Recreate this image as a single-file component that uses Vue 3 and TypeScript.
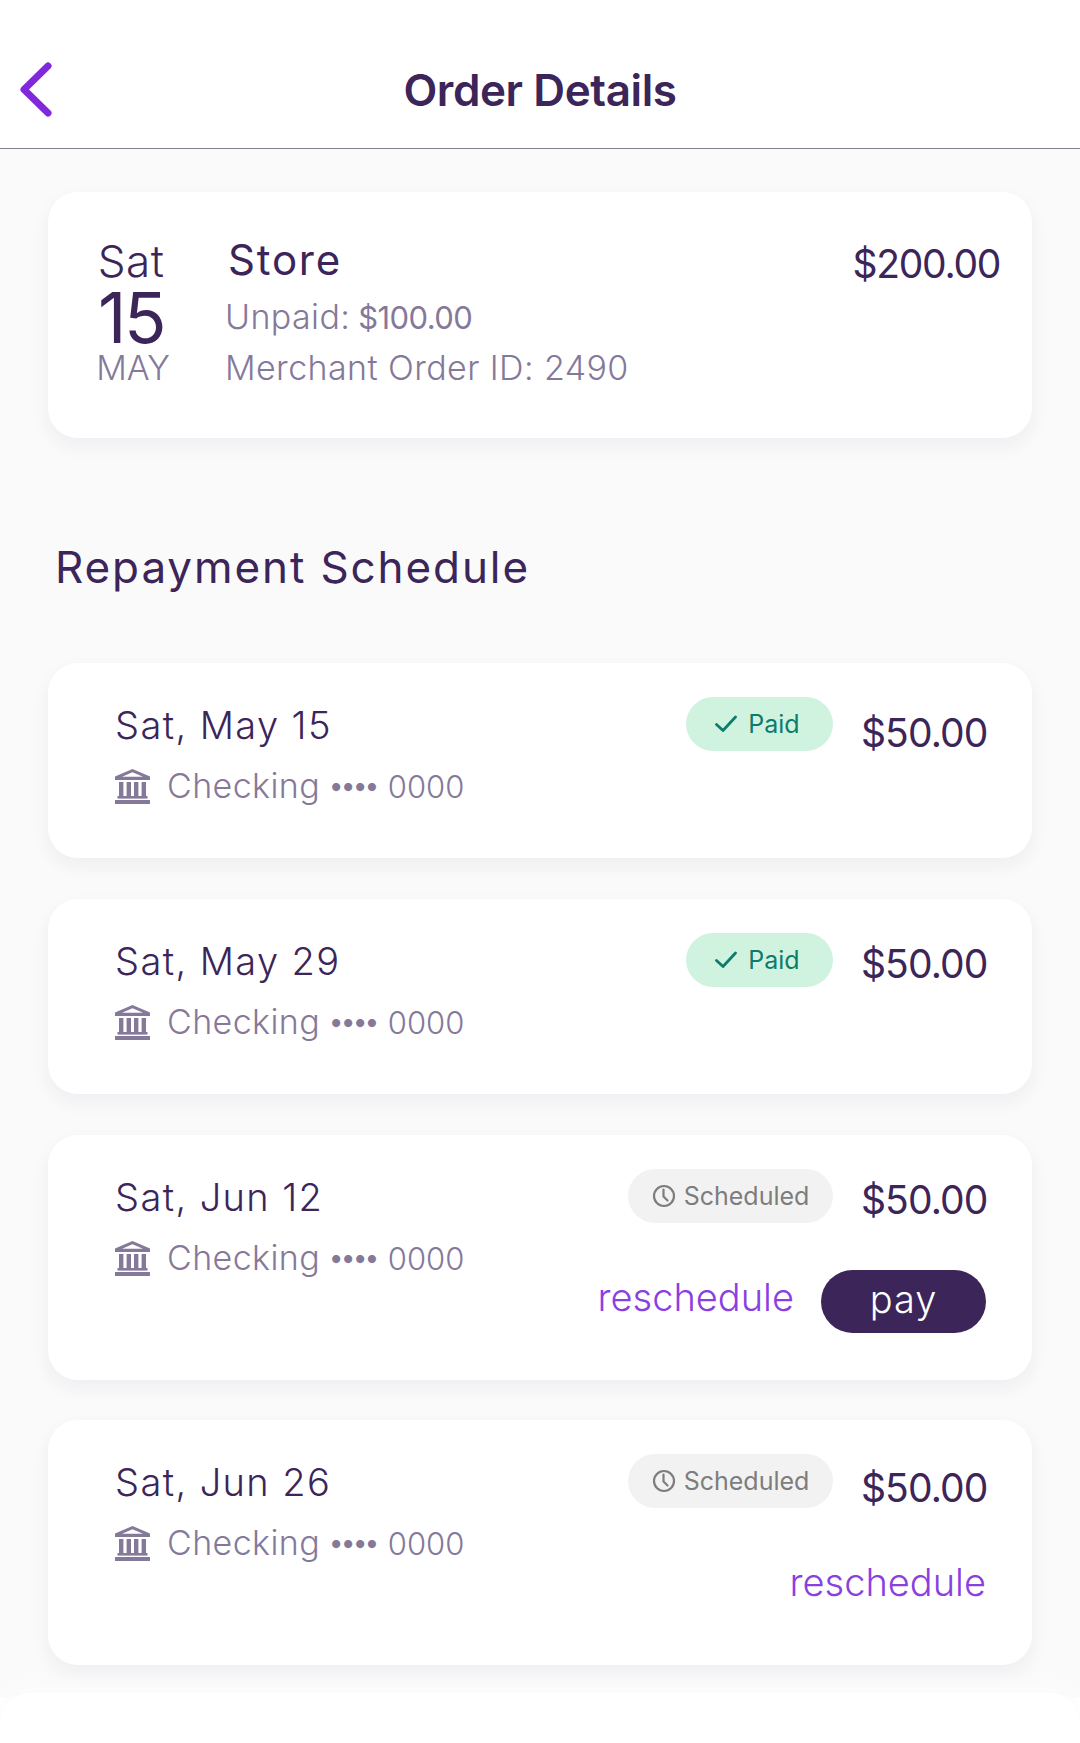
<script setup lang="ts">
interface Row {
  date: string
  status: 'paid' | 'scheduled'
  pay: boolean
  reschedule: boolean
  mod: string
}
const rows: Row[] = [
  { date: 'Sat, May 15', status: 'paid', pay: false, reschedule: false, mod: 'r1' },
  { date: 'Sat, May 29', status: 'paid', pay: false, reschedule: false, mod: 'r2' },
  { date: 'Sat, Jun 12', status: 'scheduled', pay: true, reschedule: true, mod: 'r3' },
  { date: 'Sat, Jun 26', status: 'scheduled', pay: false, reschedule: true, mod: 'r4' }
]
</script>

<template>
  <div class="page">
    <header class="topbar">
      <button class="back" aria-label="Back">
        <svg width="36" height="60" viewBox="0 0 36 60" fill="none">
          <path d="M29 6 L5 29.5 L29 53" stroke="#8128dc" stroke-width="7" stroke-linecap="round" stroke-linejoin="round" />
        </svg>
      </button>
      <h1 class="title">Order Details</h1>
    </header>

    <main class="main">
      <section class="card summary">
        <div class="cal">
          <span class="cal-day">Sat</span>
          <span class="cal-num">15</span>
          <span class="cal-mon">MAY</span>
        </div>
        <div class="info">
          <div class="store">Store</div>
          <div class="sub unpaid">Unpaid: <span class="money">$100.00</span></div>
          <div class="sub merchant">Merchant Order ID: 2490</div>
        </div>
        <div class="total">$200.00</div>
      </section>

      <h2 class="heading">Repayment Schedule</h2>

      <div class="list">
        <article v-for="row in rows" :key="row.date" class="card pay-row" :class="[row.mod, { tall: row.reschedule }]">
          <div class="left">
            <div class="date">{{ row.date }}</div>
            <div class="account">
              <svg class="bank" width="37" height="35" viewBox="0 0 37 35" fill="#85799a">
                <path d="M18.5 0 L36 7.5 V11 H1 V7.5 Z M18.5 3.2 L8 7.8 H29 Z" fill-rule="evenodd" />
                <rect x="5" y="13" width="4.4" height="14" />
                <rect x="12.6" y="13" width="4.4" height="14" />
                <rect x="20" y="13" width="4.4" height="14" />
                <rect x="27.6" y="13" width="4.4" height="14" />
                <rect x="3.5" y="27" width="30" height="2.6" />
                <rect x="1" y="31" width="35" height="4" />
              </svg>
              <span class="acct-text">Checking <span class="dots">••••</span> <span class="zeros">0000</span></span>
            </div>
          </div>
          <div class="right">
            <div class="top-line">
              <span v-if="row.status === 'paid'" class="chip paid">
                <svg width="22" height="18" viewBox="0 0 22 18" fill="none">
                  <path d="M1.5 9.5 L8 15.5 L20.5 2" stroke="#0f7b6c" stroke-width="2.8" stroke-linecap="round" stroke-linejoin="round" />
                </svg>
                Paid
              </span>
              <span v-else class="chip scheduled">
                <svg width="24" height="24" viewBox="0 0 24 24" fill="none">
                  <circle cx="12" cy="12" r="10" stroke="#7d7d7d" stroke-width="2.2" />
                  <path d="M11.5 5.5 V12.5 L15.5 16.5" stroke="#7d7d7d" stroke-width="2.2" stroke-linecap="round" stroke-linejoin="round" />
                </svg>
                Scheduled
              </span>
              <span class="amount">$50.00</span>
            </div>
            <div v-if="row.reschedule" class="actions">
              <a class="resched">reschedule</a>
              <button v-if="row.pay" class="pay">pay</button>
            </div>
          </div>
        </article>
      </div>
    </main>
    <div class="foot"></div>
  </div>
</template>

<style>
html, body { margin: 0; background: #fff; }
</style>

<style scoped>
.page {
  width: 1080px;
  height: 1743px;
  overflow: hidden;
  background: #fff;
  font-family: Inter, "Noto Sans", sans-serif;
  color: #3b2559;
  display: flex;
  flex-direction: column;
}
.topbar {
  height: 149px;
  flex: none;
  box-sizing: border-box;
  border-bottom: 1.5px solid #87808f;
  background: #fff;
  position: relative;
  display: flex;
  justify-content: center;
  padding-top: 63px;
}
.back {
  position: absolute;
  left: 19px;
  top: 60px;
  padding: 0;
  border: 0;
  background: none;
  line-height: 0;
}
.title {
  margin: 0;
  font-size: 44px;
  line-height: 54px;
  font-weight: 600;
  letter-spacing: -0.4px;
  color: #3b2559;
}
.main {
  height: 1548px;
  flex: none;
  box-sizing: border-box;
  background: #fafafa;
  padding: 43px 48px 0;
}
.card {
  background: #fff;
  border-radius: 30px;
  box-shadow: 0 8px 18px rgba(60, 40, 90, 0.06);
}
.summary {
  height: 246px;
  box-sizing: border-box;
  padding: 44px 32px 0 47px;
  display: flex;
  align-items: flex-start;
}
.cal {
  width: 72px;
  margin-top: 2px;
  display: flex;
  flex-direction: column;
  align-items: center;
  font-weight: 300;
}
.cal-day { font-size: 44px; line-height: 46px; letter-spacing: 0.5px; }
.cal-num { font-size: 70px; line-height: 62px; font-weight: 400; letter-spacing: -2.6px; margin-top: 3px; }
.cal-mon { font-size: 34px; line-height: 38px; color: #85799a; margin-left: 4px; }
.info {
  margin-left: 58px;
  margin-top: 1px;
  flex: 1;
}
.store { font-size: 42px; line-height: 46px; letter-spacing: 1.8px; font-weight: 400; margin-left: 3px; }
.sub {
  font-size: 34px;
  line-height: 42px;
  font-weight: 300;
  color: #85799a;
  letter-spacing: 0.4px;
}
.unpaid { margin-top: 13px; }
.money { font-size: 31px; font-weight: 400; letter-spacing: -0.6px; margin-left: -2px; }
.merchant { margin-top: 8px; }
.total { font-size: 39px; line-height: 46px; letter-spacing: -1.3px; margin-top: 5px; }
.heading {
  margin: 102px 0 0 7px;
  font-size: 44px;
  line-height: 54px;
  font-weight: 400;
  letter-spacing: 1.9px;
  color: #3b2559;
}
.list {
  margin-top: 69px;
  display: flex;
  flex-direction: column;
  gap: 41px;
}
.pay-row {
  height: 195px;
  box-sizing: border-box;
  padding: 34px 46px 0 67px;
  display: flex;
  justify-content: space-between;
  align-items: flex-start;
}
.pay-row.tall { height: 245px; }
.pay-row.r4 { margin-top: -1px; }
.left { padding-top: 5px; }
.date { font-size: 38px; line-height: 46px; font-weight: 300; letter-spacing: 1.4px; color: #3b2559; }
.account {
  display: flex;
  align-items: center;
  gap: 16px;
  margin-top: 17px;
  margin-left: -1px;
  color: #85799a;
}
.acct-text { font-size: 34px; line-height: 42px; font-weight: 300; letter-spacing: 0.4px; }
.dots { font-size: 26px; letter-spacing: -0.4px; vertical-align: 3px; font-weight: 700; }
.zeros { font-size: 31px; letter-spacing: 0; }
.right { display: flex; flex-direction: column; align-items: flex-end; }
.top-line { display: flex; align-items: flex-start; }
.chip {
  height: 54px;
  box-sizing: border-box;
  border-radius: 27px;
  display: inline-flex;
  align-items: center;
  font-size: 25px;
  font-weight: 400;
  margin-right: 28px;
}
.chip.paid {
  width: 147px;
  justify-content: center;
  gap: 11px;
  padding-right: 4px;
  background: #d0f3df;
  color: #0f7b6c;
}
.chip.scheduled {
  width: 205px;
  justify-content: center;
  gap: 8px;
  background: #f2f2f2;
  color: #7d7d7d;
}
.amount {
  width: 125px;
  font-size: 39px;
  line-height: 46px;
  font-weight: 400;
  letter-spacing: -0.9px;
  text-align: right;
  margin-top: 13px;
  white-space: nowrap;
}
.r2 .amount, .r3 .amount { margin-top: 8px; }
.r4 .amount { margin-top: 11px; }
.actions {
  display: flex;
  align-items: flex-start;
  gap: 27px;
  margin-top: 47px;
}
.r4 .actions { margin-top: 44px; }
.resched { font-size: 38px; line-height: 46px; font-weight: 300; letter-spacing: 0; color: #8a3fe0; margin-top: 4px; }
.pay {
  width: 165px;
  height: 63px;
  border: 0;
  border-radius: 32px;
  background: #3b2559;
  color: #fff;
  font-family: inherit;
  font-size: 38px;
  font-weight: 300;
  padding: 0 0 6px;
  letter-spacing: 1px;
}
.foot {
  flex: none;
  height: 60px;
  margin-top: -4px;
  position: relative;
  border-radius: 30px 30px 0 0;
  background: #fff;
  box-shadow: 0 -8px 14px #fcfcfc;
}
</style>
